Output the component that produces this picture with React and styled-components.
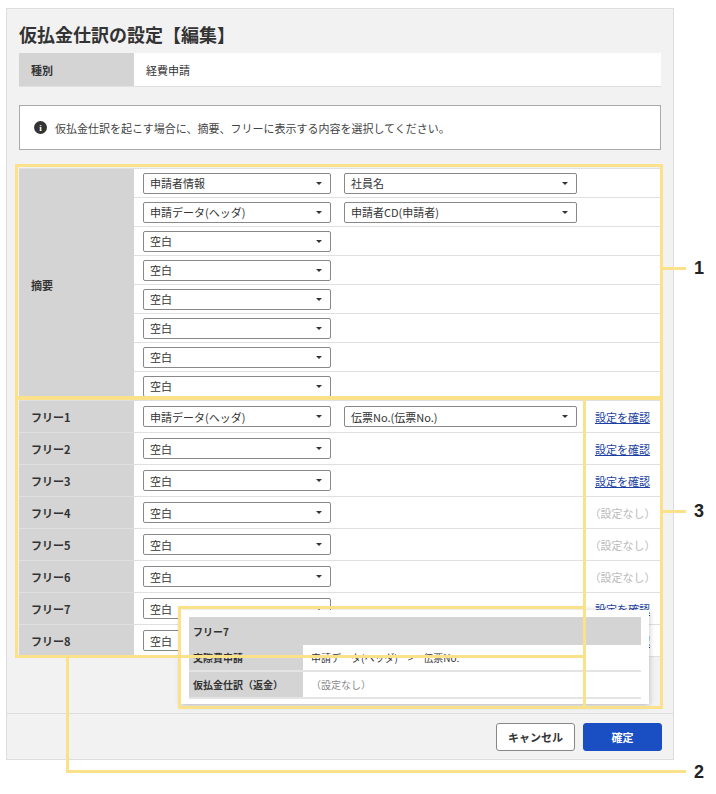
import React from 'react';
import styled, { createGlobalStyle } from 'styled-components';

const Global = createGlobalStyle`
  body { margin: 0; background: #fff; font-family: "Noto Sans CJK JP", "Noto Sans", sans-serif; color: #333; }
`;

const Page = styled.div`
  position: relative;
  width: 716px;
  height: 794px;
`;

const Panel = styled.div`
  position: absolute;
  left: 6px;
  top: 8px;
  width: 668px;
  height: 752px;
  background: #f2f2f2;
  border: 1px solid #ddd;
  box-sizing: border-box;
  display: flex;
  flex-direction: column;
`;

const Body = styled.div`
  padding: 0 12px;
  flex: 1;
`;

const Title = styled.h1`
  font-size: 18px;
  font-weight: 700;
  margin: 0;
  padding: 12px 12px 0 12px;
  height: 44px;
  box-sizing: border-box;
`;

const Row = styled.div`
  display: flex;
  height: ${(p) => p.h}px;
  border-bottom: 1px solid #e0e0e0;
  background: #fff;
`;

const Label = styled.div`
  width: 115px;
  flex: none;
  background: #d4d4d4;
  font-size: 11px;
  font-weight: 700;
  display: flex;
  align-items: center;
  padding-left: 12px;
  box-sizing: border-box;
`;

const Value = styled.div`
  font-size: 11px;
  display: flex;
  align-items: center;
  padding-left: 12px;
`;

const Info = styled.div`
  margin-top: 18px;
  height: 43px;
  border: 1px solid #aaa;
  background: #fff;
  display: flex;
  align-items: center;
  gap: 8px;
  padding-left: 14px;
  font-size: 11px;
  color: #444;
`;

const InfoIcon = styled.span`
  width: 13px;
  height: 13px;
  border-radius: 50%;
  background: #333;
  color: #fff;
  font-size: 9px;
  font-weight: 700;
  display: inline-flex;
  align-items: center;
  justify-content: center;
  font-family: "Liberation Serif", serif;
`;

const Table = styled.div`
  margin-top: 18px;
  border-top: 1px solid #e0e0e0;
`;

const Group = styled.div`
  display: flex;
`;

const GroupLabel = styled(Label)`
  align-self: stretch;
  border-bottom: 1px solid #e0e0e0;
`;

const Rows = styled.div`
  flex: 1;
  display: flex;
  flex-direction: column;
`;

const Cells = styled.div`
  flex: 1;
  display: flex;
  align-items: center;
  gap: 13px;
  padding-left: 9px;
`;

const Select = styled.div`
  width: ${(p) => p.w}px;
  height: 21px;
  border: 1px solid #888;
  border-radius: 2px;
  box-sizing: border-box;
  display: flex;
  align-items: center;
  justify-content: space-between;
  padding: 0 8px 0 6px;
  font-size: 11px;
  background: #fff;
  &::after {
    content: '';
    border-left: 3px solid transparent;
    border-right: 3px solid transparent;
    border-top: 3px solid #333;
  }
`;

const Side = styled.div`
  width: 77px;
  flex: none;
  display: flex;
  align-items: center;
  justify-content: center;
  font-size: 11px;
  border-left: 1px solid #e0e0e0;
`;

const Link = styled.a`
  color: #1a3fa0;
  text-decoration: underline;
`;

const None = styled.span`
  color: #bbb;
`;

const Footer = styled.div`
  border-top: 1px solid #ddd;
  height: 45px;
  display: flex;
  justify-content: flex-end;
  align-items: center;
  gap: 8px;
  padding-right: 11px;
`;

const Button = styled.button`
  width: 79px;
  height: 28px;
  border-radius: 3px;
  font-size: 11px;
  font-weight: 700;
  font-family: inherit;
  border: 1px solid ${(p) => (p.primary ? '#1a4fc4' : '#888')};
  background: ${(p) => (p.primary ? '#1a4fc4' : '#fff')};
  color: ${(p) => (p.primary ? '#fff' : '#333')};
`;

const Popup = styled.div`
  position: absolute;
  left: 181px;
  top: 610px;
  width: 468px;
  height: 94px;
  background: #fff;
  box-shadow: 0 1px 6px rgba(0, 0, 0, 0.25);
  padding: 7px 8px;
  box-sizing: border-box;
  font-size: 10px;
`;

const PopHead = styled.div`
  background: #d4d4d4;
  height: 28px;
  display: flex;
  align-items: center;
  padding-left: 4px;
  font-weight: 700;
`;

const PopRow = styled.div`
  display: flex;
  height: 25px;
  border-bottom: 2px solid #e4e4e4;
`;

const PopLabel = styled.div`
  width: 114px;
  background: #d4d4d4;
  font-weight: 700;
  display: flex;
  align-items: center;
  padding-left: 4px;
  box-sizing: border-box;
`;

const PopValue = styled.div`
  display: flex;
  align-items: center;
  padding-left: 8px;
  color: ${(p) => (p.muted ? '#888' : '#333')};
`;

const Box = styled.div`
  position: absolute;
  border: 3px solid #fbe28a;
  box-sizing: border-box;
  pointer-events: none;
`;

const Line = styled.div`
  position: absolute;
  background: #fbe28a;
`;

const Num = styled.div`
  position: absolute;
  font-family: "Liberation Sans", sans-serif;
  font-weight: 700;
  font-size: 18px;
  color: #222;
`;

const summary = [
  ['申請者情報', '社員名'],
  ['申請データ(ヘッダ)', '申請者CD(申請者)'],
  ['空白'], ['空白'], ['空白'], ['空白'], ['空白'], ['空白'],
];

const free = [
  ['フリー1', ['申請データ(ヘッダ)', '伝票No.(伝票No.)'], true],
  ['フリー2', ['空白'], true],
  ['フリー3', ['空白'], true],
  ['フリー4', ['空白'], false],
  ['フリー5', ['空白'], false],
  ['フリー6', ['空白'], false],
  ['フリー7', ['空白'], true],
  ['フリー8', ['空白'], true],
];

const Selects = ({ items }) => (
  <Cells>
    <Select w={188}>{items[0]}</Select>
    {items[1] && <Select w={233}>{items[1]}</Select>}
  </Cells>
);

export default function App() {
  return (
    <Page>
      <Global />
      <Panel>
        <Title>仮払金仕訳の設定【編集】</Title>
        <Body>
          <Row h={33}>
            <Label>種別</Label>
            <Value>経費申請</Value>
          </Row>
          <Info>
            <InfoIcon>i</InfoIcon>
            仮払金仕訳を起こす場合に、摘要、フリーに表示する内容を選択してください。
          </Info>
          <Table>
            <Group>
              <GroupLabel>摘要</GroupLabel>
              <Rows>
                {summary.map((s, i) => (
                  <Row key={i} h={28}>
                    <Selects items={s} />
                  </Row>
                ))}
              </Rows>
            </Group>
            {free.map(([l, s, link]) => (
              <Row key={l} h={31}>
                <Label>{l}</Label>
                <Selects items={s} />
                <Side>{link ? <Link>設定を確認</Link> : <None>（設定なし）</None>}</Side>
              </Row>
            ))}
          </Table>
        </Body>
        <Footer>
          <Button>キャンセル</Button>
          <Button primary>確定</Button>
        </Footer>
      </Panel>
      <Popup>
        <PopHead>フリー7</PopHead>
        <PopRow>
          <PopLabel>交際費申請</PopLabel>
          <PopValue>申請データ(ヘッダ)　&gt;　伝票No.</PopValue>
        </PopRow>
        <PopRow>
          <PopLabel>仮払金仕訳（返金）</PopLabel>
          <PopValue muted>（設定なし）</PopValue>
        </PopRow>
      </Popup>
      <Box style={{ left: 15, top: 164, width: 648, height: 235 }} />
      <Box style={{ left: 15, top: 397, width: 571, height: 261 }} />
      <Box style={{ left: 583, top: 397, width: 80, height: 312 }} />
      <Box style={{ left: 178, top: 606, width: 408, height: 103 }} />
      <Line style={{ left: 662, top: 267, width: 24, height: 3 }} />
      <Num style={{ left: 694, top: 258 }}>1</Num>
      <Line style={{ left: 662, top: 510, width: 24, height: 3 }} />
      <Num style={{ left: 694, top: 501 }}>3</Num>
      <Line style={{ left: 66, top: 657, width: 3, height: 116 }} />
      <Line style={{ left: 66, top: 770, width: 620, height: 3 }} />
      <Num style={{ left: 694, top: 762 }}>2</Num>
    </Page>
  );
}
